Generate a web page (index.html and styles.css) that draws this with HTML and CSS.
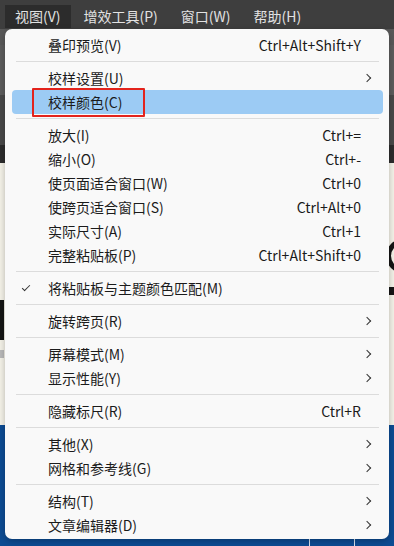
FILE: index.html
```html
<!DOCTYPE html>
<html lang="zh-CN">
<head>
  <meta charset="UTF-8">
  <title>视图菜单</title>
  <link rel="stylesheet" href="styles.css">
</head>
<body>
  <!-- Menu bar -->
  <div class="menubar">
    <span class="menubar-item active">视图(V)</span>
    <span class="menubar-item">增效工具(P)</span>
    <span class="menubar-item">窗口(W)</span>
    <span class="menubar-item">帮助(H)</span>
  </div>

  <!-- Workspace behind the menu -->
  <div class="workspace">
    <div class="band band-tool1"></div>
    <div class="band band-tool2"></div>
    <div class="band band-tool3"></div>
    <div class="band band-tabs"></div>
    <div class="band band-page">
      <span class="stroke-left"></span>
      <span class="stroke-left-thin"></span>
      <span class="curve-right"></span>
      <span class="curve-right-low"></span>
    </div>
    <div class="band band-blue">
      <span class="rule rule-a"></span>
      <span class="rule rule-b"></span>
    </div>
  </div>

  <!-- Dropdown -->
  <div class="dropdown">
    <div class="item"><span class="label">叠印预览(V)</span><span class="keys">Ctrl+Alt+Shift+Y</span></div>
    <div class="sep"></div>
    <div class="item"><span class="label">校样设置(U)</span><span class="arrow"></span></div>
    <div class="item hover"><span class="label"><span class="marked">校样颜色(C)</span></span></div>
    <div class="sep"></div>
    <div class="item"><span class="label">放大(I)</span><span class="keys">Ctrl+=</span></div>
    <div class="item"><span class="label">缩小(O)</span><span class="keys">Ctrl+-</span></div>
    <div class="item"><span class="label">使页面适合窗口(W)</span><span class="keys">Ctrl+0</span></div>
    <div class="item"><span class="label">使跨页适合窗口(S)</span><span class="keys">Ctrl+Alt+0</span></div>
    <div class="item"><span class="label">实际尺寸(A)</span><span class="keys">Ctrl+1</span></div>
    <div class="item"><span class="label">完整粘贴板(P)</span><span class="keys">Ctrl+Alt+Shift+0</span></div>
    <div class="sep"></div>
    <div class="item"><span class="check"></span><span class="label">将粘贴板与主题颜色匹配(M)</span></div>
    <div class="sep"></div>
    <div class="item"><span class="label">旋转跨页(R)</span><span class="arrow"></span></div>
    <div class="sep"></div>
    <div class="item"><span class="label">屏幕模式(M)</span><span class="arrow"></span></div>
    <div class="item"><span class="label">显示性能(Y)</span><span class="arrow"></span></div>
    <div class="sep"></div>
    <div class="item"><span class="label">隐藏标尺(R)</span><span class="keys">Ctrl+R</span></div>
    <div class="sep"></div>
    <div class="item"><span class="label">其他(X)</span><span class="arrow"></span></div>
    <div class="item"><span class="label">网格和参考线(G)</span><span class="arrow"></span></div>
    <div class="sep"></div>
    <div class="item"><span class="label">结构(T)</span><span class="arrow"></span></div>
    <div class="item"><span class="label">文章编辑器(D)</span><span class="arrow"></span></div>
  </div>
</body>
</html>
```

FILE: styles.css
```css
body {
  margin: 0;
  width: 394px;
  height: 546px;
  overflow: hidden;
  position: relative;
  font-family: "Noto Sans CJK SC", "Noto Sans", sans-serif;
  font-size: 14px;
  background: #0c4b92;
}

/* Menu bar */
.menubar {
  height: 29px;
  background: #3e3e3e;
  display: flex;
  align-items: flex-start;
  gap: 3px;
  padding-left: 5px;
}

.menubar-item {
  height: 23px;
  margin-top: 5px;
  line-height: 22px;
  padding: 0 10px;
  color: #e2e2e2;
}

.menubar-item.active {
  background: #2c2c2c;
}

/* Workspace bands */
.workspace {
  display: flex;
  flex-direction: column;
}

.band {
  position: relative;
  overflow: hidden;
}

.band-tool1 { height: 16px; background: #585858; }
.band-tool2 { height: 50px; background: #5c5c5c; }
.band-tool3 { height: 50px; background: #484848; }
.band-tabs  { height: 18px; background: #2c2c2c; }

.band-page {
  height: 262px;
  background: #f3f1e7;
}

.band-blue {
  height: 121px;
  background: #0c4b92;
}

/* bits of page artwork peeking out beside the menu */
.stroke-left {
  position: absolute;
  left: 0;
  top: 137px;
  width: 4px;
  height: 40px;
  background: #151515;
}

.stroke-left-thin {
  position: absolute;
  left: 0;
  top: 187px;
  width: 4px;
  height: 8px;
  background: #b8b8b8;
}

.curve-right {
  position: absolute;
  left: 386px;
  top: 76px;
  width: 24px;
  height: 24px;
  border: 5px solid #151515;
  border-radius: 50%;
}

.curve-right-low {
  position: absolute;
  left: 386px;
  top: 124px;
  width: 20px;
  height: 8px;
  background: #151515;
}

.rule {
  position: absolute;
  bottom: 0;
  width: 1px;
  height: 10px;
  background: #d8e2ee;
}

.rule-a { left: 309px; }
.rule-b { left: 354px; }

/* Dropdown */
.dropdown {
  position: absolute;
  left: 5px;
  top: 29px;
  width: 371px;
  padding: 4px 6px 2px 7px;
  background: #f9f9f9;
  border-radius: 7px;
  box-shadow: 0 2px 6px rgba(0, 0, 0, 0.25);
}

.item {
  height: 24px;
  display: grid;
  grid-template-columns: 36px 1fr auto 22px;
  align-items: center;
  color: #1b1b1b;
  border-radius: 4px;
  position: relative;
}

.item .label {
  grid-column: 2;
  white-space: nowrap;
  line-height: 24px;
}

.item .keys {
  grid-column: 3;
  line-height: 24px;
}

.item .arrow {
  grid-column: 4;
  justify-self: start;
  margin-left: 5px;
  width: 5px;
  height: 5px;
  border-top: 1px solid #333;
  border-right: 1px solid #333;
  transform: translateX(-2px) rotate(45deg);
}

.item .check {
  grid-column: 1;
  justify-self: start;
  margin-left: 10px;
  margin-top: -3px;
  width: 7px;
  height: 3px;
  border-left: 1px solid #333;
  border-bottom: 1px solid #333;
  transform: rotate(-45deg);
}

.item.hover {
  background: #9ccbf4;
}

.marked {
  display: inline-block;
  position: relative;
}

.marked::after {
  content: "";
  position: absolute;
  left: -16px;
  right: -23px;
  top: -2px;
  bottom: -3px;
  border: 2px solid #e3231c;
  border-radius: 1px;
}

.sep {
  height: 1px;
  margin: 4px 4px 4px 4px;
  background: #dcdcdc;
}
```
